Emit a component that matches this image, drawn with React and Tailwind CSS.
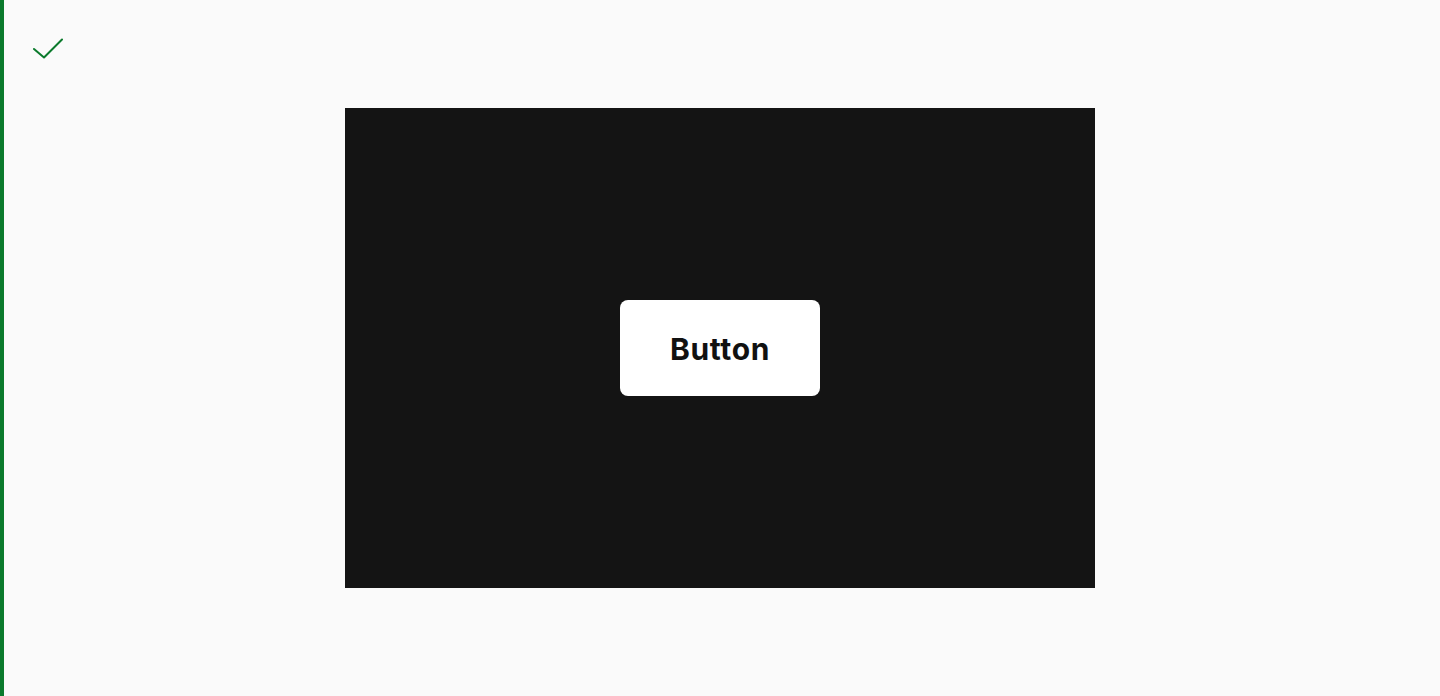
export default function App() {
  return (
    <div className="min-h-[696px] w-full bg-[#fafafa] flex" style={{ fontFamily: 'Inter, "Liberation Sans", sans-serif' }}>
      <div className="w-[4px] shrink-0 bg-[#0b7a2c]" />
      <div className="flex-1 flex flex-col">
        <div className="h-[108px] pl-[29px] pt-[36px]">
          <svg width="32" height="24" viewBox="0 0 32 24" fill="none">
            <path d="M1 13 L11 21.5 L29 3.5" stroke="#0b7a2c" strokeWidth="2" strokeLinecap="round" strokeLinejoin="round" />
          </svg>
        </div>
        <div className="flex justify-center -ml-[4px]">
          <div className="w-[750px] h-[480px] bg-[#141414] flex items-center justify-center">
            <button className="w-[200px] h-[96px] pt-[2px] rounded-[8px] bg-white text-[#111] text-[30px] font-bold tracking-[0.6px]">
              Button
            </button>
          </div>
        </div>
      </div>
    </div>
  )
}
